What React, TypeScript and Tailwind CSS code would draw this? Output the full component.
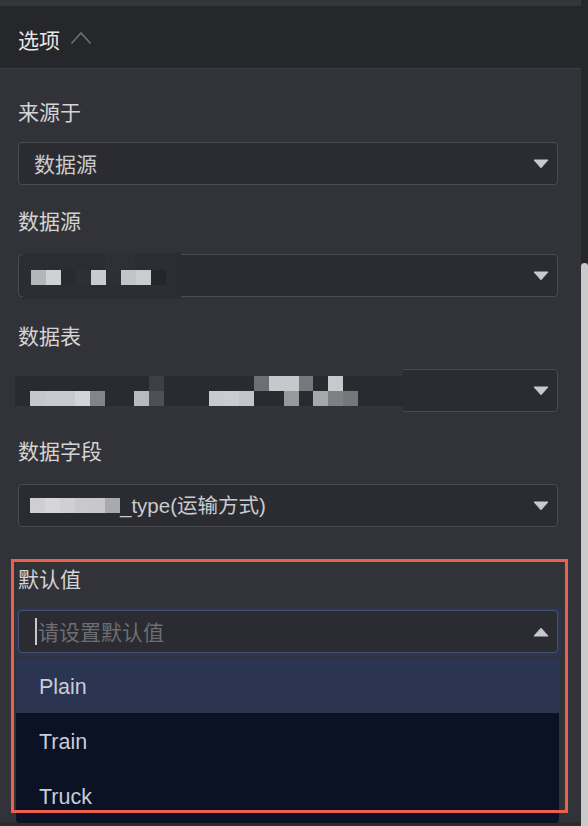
import React from "react";

const CJK = '"Noto Sans CJK SC", "Liberation Sans", sans-serif';
const LAT = '"Liberation Sans", "Noto Sans CJK SC", sans-serif';

function Caret({ up = false }: { up?: boolean }) {
  return (
    <svg width="16" height="10" viewBox="0 0 16 10" className="shrink-0">
      {up ? (
        <path d="M8 1.2 L15 9 L1 9 Z" fill="#c9cacd" stroke="#c9cacd" strokeWidth="1" strokeLinejoin="round" />
      ) : (
        <path d="M1 1 L15 1 L8 8.8 Z" fill="#c9cacd" stroke="#c9cacd" strokeWidth="1" strokeLinejoin="round" />
      )}
    </svg>
  );
}

function Label({ children, className = "" }: { children: React.ReactNode; className?: string }) {
  return (
    <div className={"h-[30px] leading-[30px] text-[21px] text-[#d4d4d7] " + className} style={{ fontFamily: CJK }}>
      {children}
    </div>
  );
}

function Select({ children, className = "", overlay }: { children?: React.ReactNode; className?: string; overlay?: React.ReactNode }) {
  return (
    <div
      className={
        "relative h-[43px] rounded-[4px] border border-[#4a4b50] bg-[#2b2c31] flex items-center pl-[15px] pr-[8px] " +
        className
      }
    >
      <div className="flex-1 flex items-center text-[21px] text-[#cbcbce]" style={{ fontFamily: CJK }}>
        {children}
      </div>
      <Caret />
      {overlay}
    </div>
  );
}

type Cell = string | null;

function Row({ cells }: { cells: Cell[] }) {
  return (
    <div className="flex h-[15px]">
      {cells.map((c, i) => (
        <div key={i} className="w-[15px] h-[15px]" style={{ background: c ?? "transparent" }} />
      ))}
    </div>
  );
}

export default function App() {
  const d = "#2a2b30";
  const row3a: Cell[] = [d, d, d, d, d, d, d, d, d, "#3e3f44", d, d, d, d, d, d, "#6e6f74", "#c7c8cb", "#c7c8cb", "#77787c", d, "#c8c9cc", d, d, d, d];
  const row3b: Cell[] = [d, "#c6c7ca", "#c9cacd", "#c9cacd", "#d3d4d7", "#838488", d, d, "#b9babd", "#4f5055", d, d, d, "#c9cacd", "#cbcccf", "#c4c5c8", d, d, "#98999d", d, "#a7a8ab", "#7f8084", "#76777b", d, d, d];

  return (
    <div className="w-[588px] h-[826px] bg-[#323338] flex overflow-hidden">
      <div className="flex-1 flex flex-col relative">
        <div className="h-[6px] bg-[#35363b]" />
        <div className="h-[63px] bg-[#26272b] border-b border-[#3c3d42] flex items-center pl-[18px] gap-[10px] pt-[4px]">
          <span className="text-[21px] text-[#e6e6e8] leading-[30px]" style={{ fontFamily: CJK }}>
            选项
          </span>
          <svg width="22" height="14" viewBox="0 0 22 14" className="mt-[-3px]">
            <path d="M1.5 12.5 L11 2 L20.5 12.5" fill="none" stroke="#6f7075" strokeWidth="1.6" />
          </svg>
        </div>

        <div className="flex flex-col pl-[18px] pr-[23px]">
          <Label className="mt-[27px]">来源于</Label>
          <Select className="mt-[16px]">数据源</Select>

          <Label className="mt-[20px]">数据源</Label>
          <Select
            className="mt-[19px]"
            overlay={
              <div className="absolute left-[4px] top-[-2px] w-[158px] h-[46px] bg-[#2c2d32] flex flex-col">
                <div className="flex h-[17px]">
                  <div className="w-[82px]" />
                  <div className="w-[30px] bg-[#2e2f37]" />
                </div>
                <div className="pl-[8px]">
                  <Row cells={["#b5b6b9", "#d0d1d4", "#2a2b30", "#2e2f34", "#cacbce", "#2e2f34", "#c3c4c7", "#cbccd0", "#25262a"]} />
                </div>
              </div>
            }
          />

          <Label className="mt-[23px]">数据表</Label>
          <Select
            className="mt-[19px]"
            overlay={
              <div className="absolute left-[-4px] top-[-2px] w-[388px] h-[45px] bg-[#333439] flex flex-col pt-[8px]">
                <Row cells={row3a} />
                <Row cells={row3b} />
              </div>
            }
          />

          <Label className="mt-[23px]">数据字段</Label>
          <Select className="mt-[19px]">
            <div className="flex h-[15px] w-[90px] ml-[-4px]">
              <div className="flex-1 bg-[#cfcfd3]" />
              <div className="flex-1 bg-[#d6d6d9]" />
              <div className="flex-1 bg-[#d0d0d3]" />
              <div className="flex-1 bg-[#c9c9cc]" />
              <div className="flex-1 bg-[#c8c8cb]" />
              <div className="flex-1 bg-[#a9aaad]" />
            </div>
            <span className="text-[#cbcbce] text-[20.5px]" style={{ fontFamily: LAT }}>
              _type(<span style={{ fontFamily: CJK }}>运输方式</span>)
            </span>
          </Select>

          <div className="relative mt-[36px]">
            <Label>默认值</Label>
            <div className="mt-[17px] h-[43px] rounded-[4px] border border-[#4b5270] bg-[#2b2c31] shadow-[0_0_0_3px_#2e3551] flex items-center pl-[16px] pr-[8px]">
              <div className="w-[2px] h-[27px] bg-[#c8c8cc] mr-[1px]" />
              <span className="flex-1 text-[21px] text-[#6d6e73]" style={{ fontFamily: CJK }}>
                请设置默认值
              </span>
              <Caret up />
            </div>

            <div className="absolute left-[-2px] right-[-1px] top-[95px] bg-[#0b1224] rounded-b-[4px] flex flex-col z-10">
              {["Plain", "Train", "Truck"].map((t, i) => (
                <div
                  key={t}
                  className={
                    "h-[55px] flex items-center pl-[23px] pt-[3px] text-[21.5px] text-[#c8ccd8] " + (i === 0 ? "bg-[#2b3450]" : "")
                  }
                  style={{ fontFamily: LAT }}
                >
                  {t}
                </div>
              ))}
            </div>

            <div className="absolute left-[-7px] top-[-4px] w-[557px] h-[254px] border-[3px] border-[#ec614e] pointer-events-none z-20" />
          </div>
        </div>
        <div className="absolute left-0 right-0 bottom-0 h-[4px] bg-[#2a2b2f]" />
      </div>
      <div className="w-[7px] flex flex-col">
        <div className="h-[263px] bg-[#26272b]" />
        <div className="flex-1 bg-[#c9c9c9] rounded-t-[4px]" />
      </div>
    </div>
  );
}
